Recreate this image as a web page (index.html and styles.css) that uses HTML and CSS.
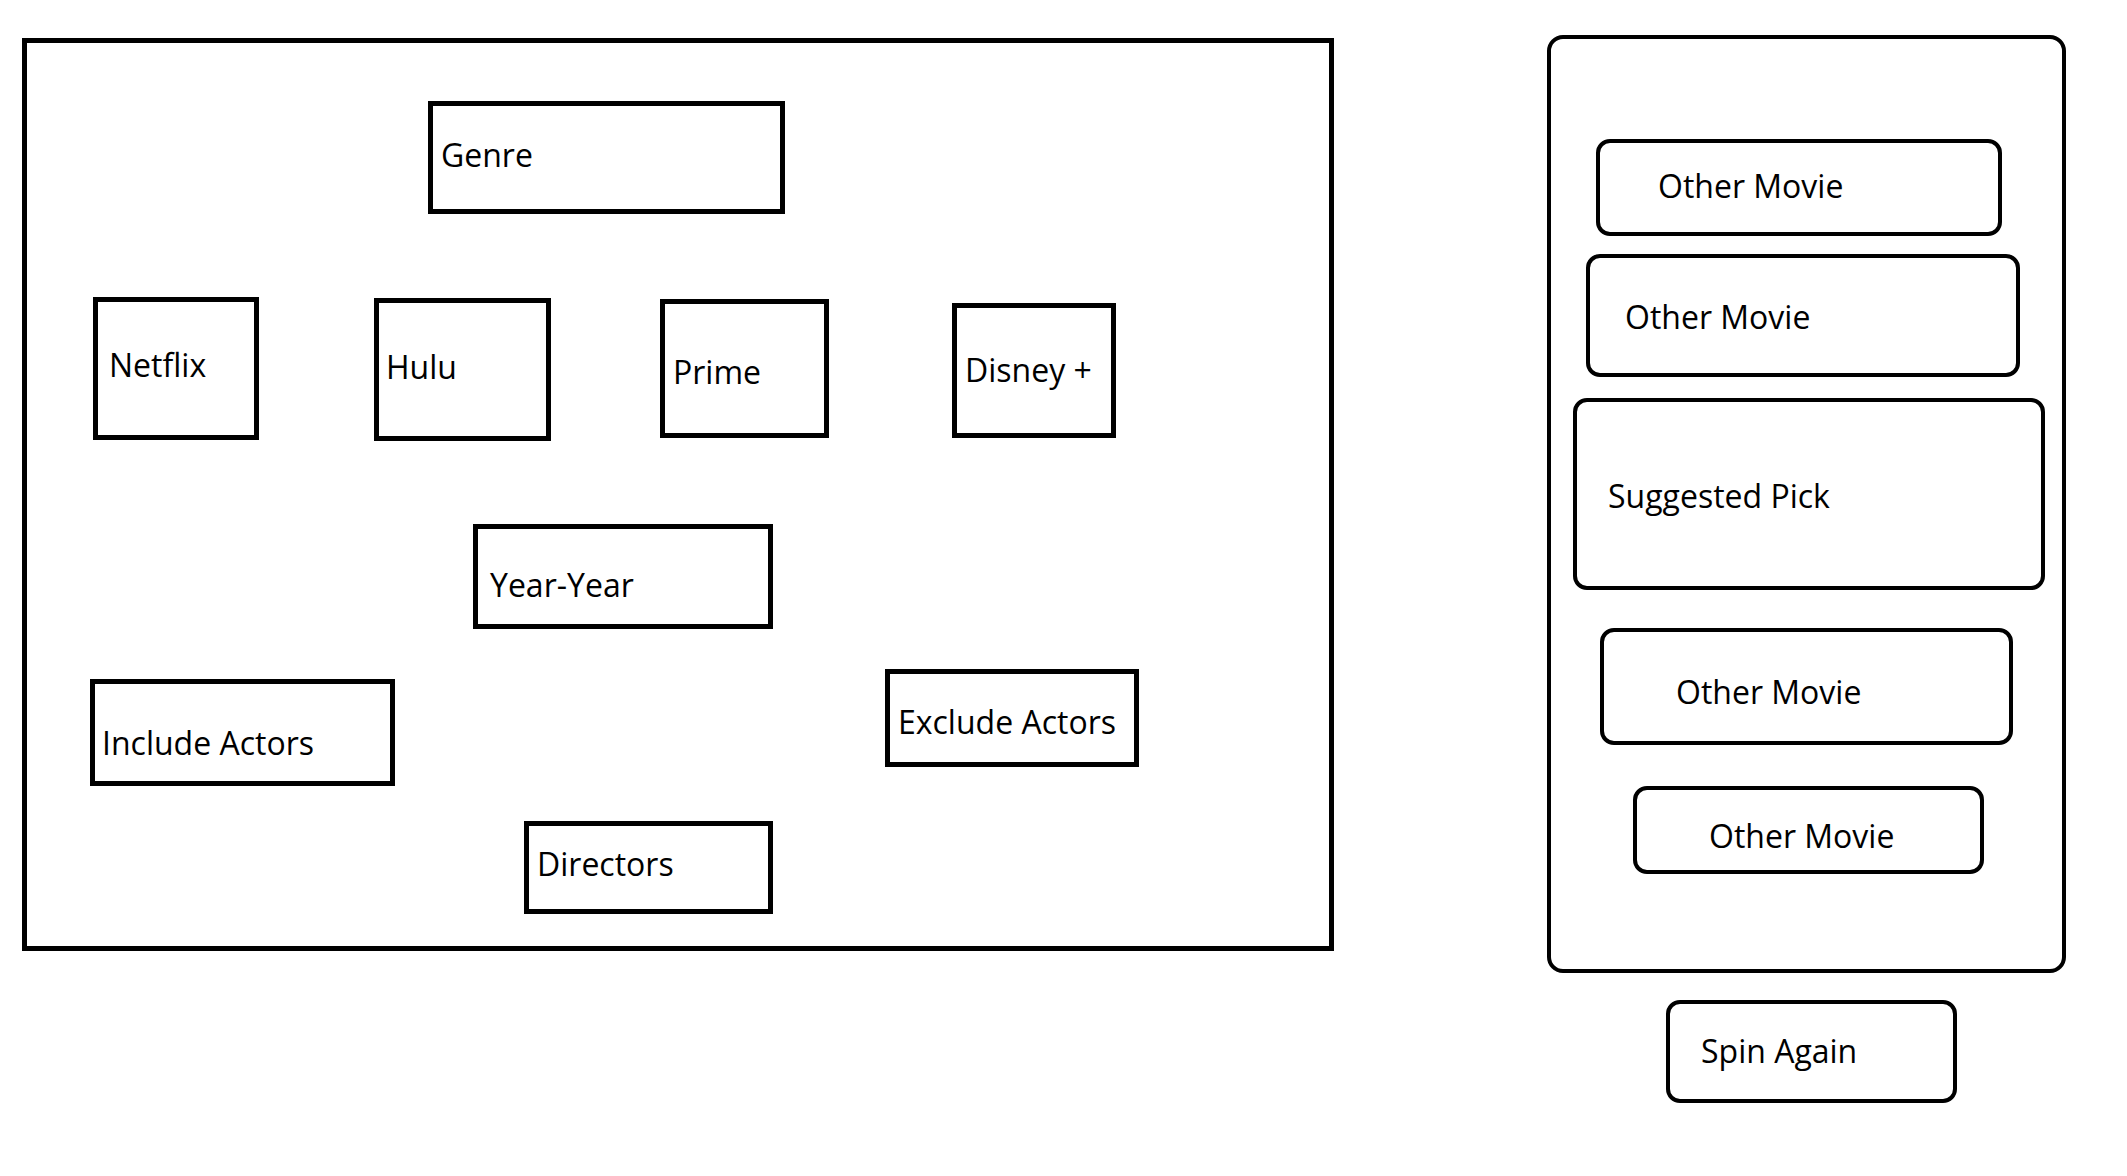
FILE: index.html
```html
<!DOCTYPE html>
<html lang="en">
<head>
<meta charset="utf-8">
<title>Movie Picker Wireframe</title>
<link rel="stylesheet" href="styles.css">
</head>
<body>
<div class="page">
  <section class="filters">
    <div class="box genre">Genre</div>
    <div class="row services">
      <div class="box netflix">Netflix</div>
      <div class="box hulu">Hulu</div>
      <div class="box prime">Prime</div>
      <div class="box disney">Disney +</div>
    </div>
    <div class="box years">Year-Year</div>
    <div class="row actors">
      <div class="box include">Include Actors</div>
      <div class="box exclude">Exclude Actors</div>
    </div>
    <div class="box directors">Directors</div>
  </section>
  <aside class="results-col">
    <div class="results">
      <div class="pill om1">Other Movie</div>
      <div class="pill om2">Other Movie</div>
      <div class="pill pick">Suggested Pick</div>
      <div class="pill om3">Other Movie</div>
      <div class="pill om4">Other Movie</div>
    </div>
    <div class="pill spin">Spin Again</div>
  </aside>
</div>
</body>
</html>
```
FILE: styles.css
```css
* { box-sizing: border-box; }
html, body { margin: 0; padding: 0; background: #fff; }
body { font-family: "Open Sans", "Noto Sans", sans-serif; color: #000; }

.page {
  display: flex;
  align-items: flex-start;
  width: 2127px;
  height: 1176px;
}

/* Left filter canvas */
.filters {
  display: flex;
  flex-direction: column;
  align-items: flex-start;
  margin-left: 22px;
  margin-top: 38px;
  width: 1312px;
  height: 913px;
  border: 5px solid #000;
}
.row { display: flex; align-items: flex-start; }

.box {
  border: 5px solid #000;
  font-size: 32px;
  line-height: 1;
  white-space: nowrap;
}

.genre { margin: 58px 0 0 401px; width: 357px; height: 113px; padding: 33px 0 0 8px; }

.services { margin-top: 83px; }
.netflix { margin: 0 0 0 66px; width: 166px; height: 143px; padding: 47px 0 0 11px; }
.hulu { margin: 1px 0 0 115px; width: 177px; height: 143px; padding: 48px 0 0 7px; }
.prime { margin: 2px 0 0 109px; width: 169px; height: 139px; padding: 52px 0 0 8px; }
.disney { margin: 6px 0 0 123px; width: 164px; height: 135px; padding: 46px 0 0 8px; }

.years { margin: 83px 0 0 446px; width: 300px; height: 105px; padding: 40px 0 0 12px; }

.actors { margin-top: 40px; }
.include { margin: 10px 0 0 63px; width: 305px; height: 107px; padding: 43px 0 0 7px; }
.exclude { margin: 0 0 0 490px; width: 254px; height: 98px; padding: 32px 0 0 8px; }

.directors { margin: 35px 0 0 497px; width: 249px; height: 93px; padding: 22px 0 0 8px; }

/* Right results column */
.results-col {
  display: flex;
  flex-direction: column;
  align-items: flex-start;
  margin-left: 213px;
  margin-top: 35px;
}
.results {
  display: flex;
  flex-direction: column;
  align-items: flex-start;
  width: 519px;
  height: 938px;
  border: 4px solid #000;
  border-radius: 16px;
}
.pill {
  border: 4px solid #000;
  border-radius: 14px;
  font-size: 32px;
  line-height: 1;
  white-space: nowrap;
}
.om1 { margin: 100px 0 0 45px; width: 406px; height: 97px; padding: 27px 0 0 58px; }
.om2 { margin: 18px 0 0 35px; width: 434px; height: 123px; padding: 43px 0 0 35px; }
.pick { margin: 21px 0 0 22px; width: 472px; height: 192px; padding: 78px 0 0 31px; }
.om3 { margin: 38px 0 0 49px; width: 413px; height: 117px; padding: 44px 0 0 72px; }
.om4 { margin: 41px 0 0 82px; width: 351px; height: 88px; padding: 30px 0 0 72px; }
.spin { margin: 27px 0 0 119px; width: 291px; height: 103px; padding: 31px 0 0 31px; }
```
